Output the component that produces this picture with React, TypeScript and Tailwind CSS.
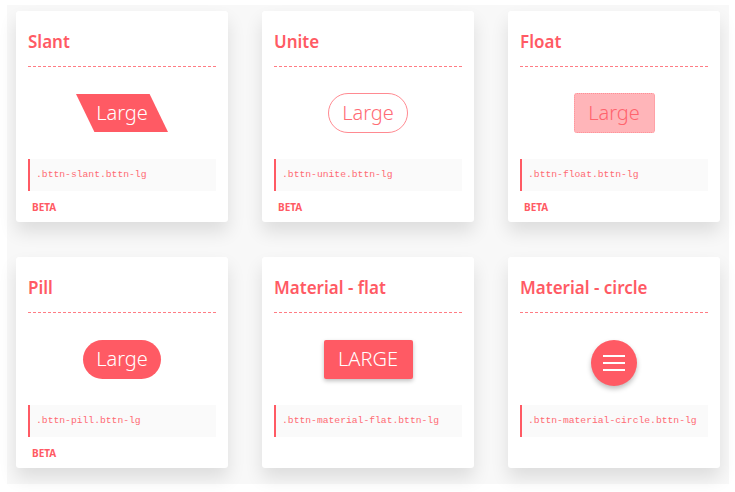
const PINK = '#ff5a64';

type Demo = {
  title: string;
  code: string;
  beta: boolean;
  button: React.ReactNode;
};

function Burger() {
  return (
    <svg width="22" height="16" viewBox="0 0 22 16" fill="none" stroke="white" strokeWidth="2">
      <line x1="0" y1="1" x2="22" y2="1" />
      <line x1="0" y1="8" x2="22" y2="8" />
      <line x1="0" y1="15" x2="22" y2="15" />
    </svg>
  );
}

const demos: Demo[] = [
  {
    title: 'Slant',
    code: '.bttn-slant.bttn-lg',
    beta: true,
    button: (
      <div className="relative flex h-[38px] w-[92px] items-center justify-center">
        <div className="absolute inset-0 bg-[#ff5a64] [clip-path:polygon(0_0,80%_0,100%_100%,20%_100%)]" />
        <span className="relative text-[20px] font-light text-white">Large</span>
      </div>
    ),
  },
  {
    title: 'Unite',
    code: '.bttn-unite.bttn-lg',
    beta: true,
    button: (
      <div className="flex h-[40px] w-[80px] items-center justify-center rounded-full border border-[#ff8a91] text-[20px] font-light text-[#ff6b74]">
        Large
      </div>
    ),
  },
  {
    title: 'Float',
    code: '.bttn-float.bttn-lg',
    beta: true,
    button: (
      <div className="flex h-[40px] w-[81px] items-center justify-center rounded-[3px] border border-dotted border-[#ff8e95] bg-[#ffb5b9] text-[20px] font-light text-[#ff636d]">
        Large
      </div>
    ),
  },
  {
    title: 'Pill',
    code: '.bttn-pill.bttn-lg',
    beta: true,
    button: (
      <div className="flex h-[39px] w-[78px] items-center justify-center rounded-full bg-[#ff5a64] text-[20px] font-light text-white">
        Large
      </div>
    ),
  },
  {
    title: 'Material - flat',
    code: '.bttn-material-flat.bttn-lg',
    beta: false,
    button: (
      <div className="flex h-[39px] w-[89px] items-center justify-center rounded-[2px] bg-[#ff5a64] text-[20px] font-light text-white shadow-[0_2px_4px_rgba(0,0,0,0.25)]">
        LARGE
      </div>
    ),
  },
  {
    title: 'Material - circle',
    code: '.bttn-material-circle.bttn-lg',
    beta: false,
    button: (
      <div className="mt-[7px] flex h-[46px] w-[46px] items-center justify-center rounded-full bg-[#ff5a64] shadow-[0_3px_5px_rgba(0,0,0,0.25)]">
        <Burger />
      </div>
    ),
  },
];

function Card({ d }: { d: Demo }) {
  return (
    <div className="flex h-[211px] w-[212px] flex-col rounded-[3px] bg-white px-[12px] pt-[19px] shadow-[0_10px_18px_rgba(0,0,0,0.11)]">
      <h3 className="text-[17px] font-semibold leading-[24px] text-[#ff5a64]">{d.title}</h3>
      <div className="mt-[12px] border-b border-dashed border-[#ff7c84]" />
      <div className="flex h-[92px] items-center justify-center">{d.button}</div>
      <div className="flex h-[32px] items-center border-l-2 border-[#ff5a64] bg-[#fafafa] pl-[6px] font-['Liberation_Mono',monospace] text-[9.7px] text-[#ff6b74]">
        {d.code}
      </div>
      {d.beta && (
        <div className="mt-[9px] pl-[4px] text-[10px] font-bold text-[#ff5a64]">BETA</div>
      )}
    </div>
  );
}

export default function App() {
  return (
    <div className="h-[492px] w-[735px] bg-white pl-[7px] pt-[5px] font-['Noto_Sans',sans-serif]" style={{ color: PINK }}>
      <div className="grid h-[479px] w-[722px] grid-cols-[repeat(3,212px)] content-start gap-x-[34px] gap-y-[35px] bg-[#f8f8f8] pl-[9px] pt-[6px]">
        {demos.map(d => (
          <Card key={d.title} d={d} />
        ))}
      </div>
    </div>
  );
}
